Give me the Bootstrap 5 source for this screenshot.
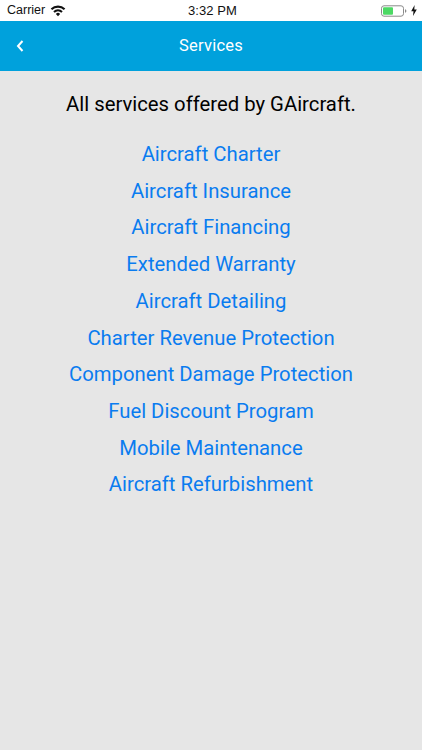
<!DOCTYPE html>
<html lang="en"><head><meta charset="utf-8">
<title>Services</title>
<link href="https://cdn.jsdelivr.net/npm/bootstrap@5.3.0/dist/css/bootstrap.min.css" rel="stylesheet">
<style>
html,body{height:100%}
body{background:#e6e6e6;font-family:Roboto,"Liberation Sans",sans-serif;overflow:hidden}
.status-strip{height:21px;background:#fff;color:#111;padding:0 5px 0 7px;font-family:"Liberation Sans",sans-serif;font-size:12.5px}
.status-side{flex:1 1 0}
.carrier-gap{gap:5px}
.status-time{font-size:13px;font-weight:500;letter-spacing:.1px;margin-left:1px}
.head-strip{height:50px;background:#00a1dc;color:#fff;position:relative;font-size:16.5px;letter-spacing:.25px}
.back-link{position:absolute;left:16px;top:18px;line-height:0}
.intro-line{font-size:20.3px;color:#000;line-height:24px;margin:21px 0 20px}
.svc-list{line-height:36.7px;font-size:20.3px}
.svc-list a{color:#0a7cf0;text-decoration:none;display:block}
</style></head>
<body>
<div class="status-strip d-flex align-items-center">
  <div class="status-side d-flex align-items-center carrier-gap">
    <span>Carrier</span>
    <svg width="16" height="12" viewBox="0 0 16 12"><path d="M8 11.2 5.900 8.900a3 3 0 0 1 4.200 0zM4.700 7.700 3.300 6.200a6.800 6.800 0 0 1 9.400 0l-1.400 1.500a4.800 4.800 0 0 0-6.600 0zM2.200 5.100.7 3.500a10.600 10.600 0 0 1 14.600 0l-1.500 1.600a8.400 8.400 0 0 0-11.600 0z" fill="#111"/></svg>
  </div>
  <div class="status-time">3:32 PM</div>
  <div class="status-side d-flex align-items-center justify-content-end gap-1">
    <svg width="26" height="12" viewBox="0 0 26 12"><rect x=".5" y=".8" width="22" height="10.400" rx="2.500" fill="none" stroke="#8a8a8a"/><rect x="2" y="2.300" width="10" height="7.400" rx="1" fill="#4cd964"/><path d="M24 4.200c1 .3 1.400 1 1.400 1.800s-.4 1.500-1.400 1.800z" fill="#8a8a8a"/></svg>
    <svg width="6" height="11" viewBox="0 0 6 11"><path d="M3.600 0 .2 6.200h2.300L2 11l3.800-6.600H3.300z" fill="#111"/></svg>
  </div>
</div>
<div class="head-strip d-flex align-items-center justify-content-center">
  <a class="back-link" href="#" aria-label="Back"><svg width="9" height="14" viewBox="0 0 9 14"><path d="M6.500 2 2 7l4.500 5" fill="none" stroke="#fff" stroke-width="2"/></svg></a>
  <span>Services</span>
</div>
<main class="text-center">
  <p class="intro-line">All services offered by GAircraft.</p>
  <div class="svc-list">
    <a href="#">Aircraft Charter</a>
    <a href="#">Aircraft Insurance</a>
    <a href="#">Aircraft Financing</a>
    <a href="#">Extended Warranty</a>
    <a href="#">Aircraft Detailing</a>
    <a href="#">Charter Revenue Protection</a>
    <a href="#">Component Damage Protection</a>
    <a href="#">Fuel Discount Program</a>
    <a href="#">Mobile Maintenance</a>
    <a href="#">Aircraft Refurbishment</a>
  </div>
</main>
<script src="https://cdn.jsdelivr.net/npm/bootstrap@5.3.0/dist/js/bootstrap.bundle.min.js"></script>
</body></html>
